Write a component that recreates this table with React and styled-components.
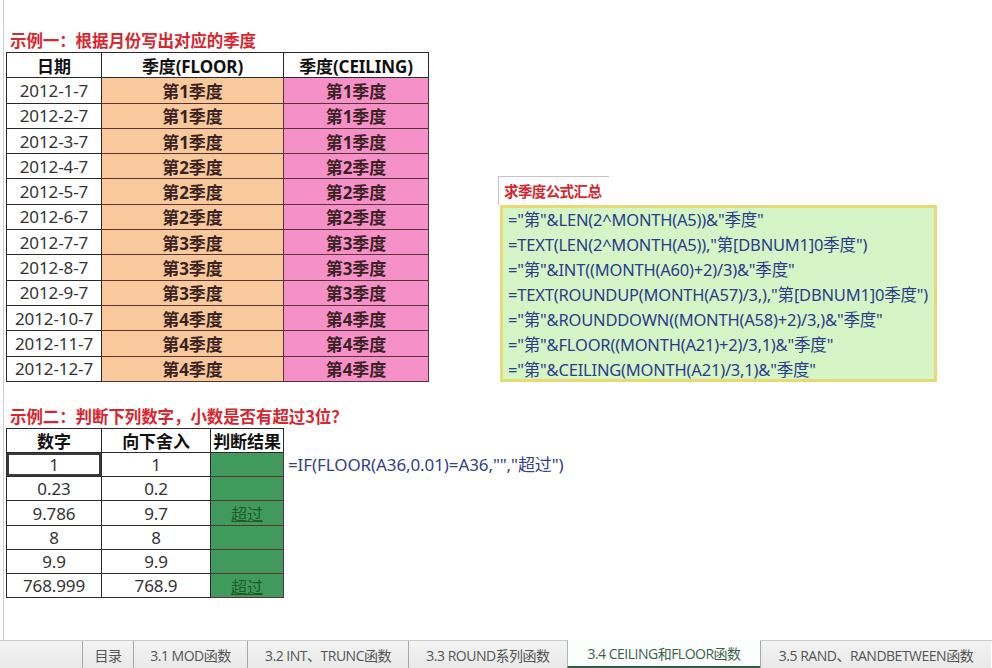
import React from 'react'
import styled, { createGlobalStyle } from 'styled-components'

const GlobalStyle = createGlobalStyle`
  html, body {
    margin: 0;
    padding: 0;
    background: #ffffff;
  }
  body {
    font-family: "Noto Sans", "Noto Sans CJK SC", sans-serif;
  }
`

const Sheet = styled.div`
  width: 992px;
  height: 668px;
  display: flex;
  flex-direction: column;
  overflow: hidden;
  background: #fff;
`

const Canvas = styled.div`
  flex: 1;
  margin-left: 3px;
  border-left: 1px solid #cfcfcf;
  padding: 29px 0 0 2px;
`

const SectionTitle = styled.div`
  height: 23px;
  line-height: 23px;
  padding: ${p => p.top || 0}px 0 0 4px;
  font-family: "Noto Sans CJK SC", sans-serif;
  font-size: 16.5px;
  font-weight: 700;
  color: #d8262e;
  letter-spacing: -0.1px;
`

const ExampleRow = styled.div`
  display: flex;
  align-items: ${p => p.align || 'flex-start'};
  gap: ${p => p.gap || 0}px;
`

const Grid = styled.div`
  display: grid;
  grid-template-columns: ${p => p.cols};
  grid-auto-rows: ${p => p.rowH}px;
  border-top: 1px solid #2a2a2a;
  border-left: 1px solid #2a2a2a;
`

const Cell = styled.div`
  display: flex;
  align-items: center;
  justify-content: center;
  border-right: 1px solid ${p => (p.bg ? '#5a3434' : '#2a2a2a')};
  border-bottom: 1px solid ${p => (p.bg ? '#5a3434' : '#2a2a2a')};
  background: ${p => p.bg || '#fff'};
  font-family: "Noto Sans", "Noto Sans CJK SC", sans-serif;
  font-size: 17px;
  font-weight: ${p => (p.bold ? 700 : 400)};
  color: ${p => p.color || '#333'};
  white-space: nowrap;
  letter-spacing: -0.1px;
  box-shadow: ${p => (p.active ? 'inset 0 0 0 2px #3a3a3a' : 'none')};
`

const Over = styled.span`
  color: #1f5a2e;
  text-decoration: underline;
  font-family: "Noto Sans CJK SC", sans-serif;
  font-size: 16px;
`

const FormulaColumn = styled.div`
  display: flex;
  flex-direction: column;
  align-items: flex-start;
`

const FormulaTitle = styled.div`
  height: 28px;
  line-height: 28px;
  padding: 0 8px 0 5px;
  border-top: 1px solid #c4c4c4;
  border-left: 1px solid #c4c4c4;
  font-family: "Noto Sans CJK SC", sans-serif;
  font-size: 14.5px;
  font-weight: 700;
  color: #d8262e;
  letter-spacing: -0.6px;
  white-space: nowrap;
`

const FormulaBox = styled.div`
  width: 426px;
  height: 171px;
  border: 3px solid #e6da72;
  background: #d5f5c6;
  padding: 0 0 0 5px;
  box-sizing: content-box;
  margin-left: 2px;
`

const FormulaLine = styled.div`
  height: 25px;
  line-height: 24px;
  font-family: "Noto Sans", "Noto Sans CJK SC", sans-serif;
  font-size: 16.5px;
  color: #2b3c8c;
  white-space: nowrap;
  letter-spacing: -0.2px;
`

const InlineFormula = styled(FormulaLine)`
  margin: 25px 0 0 4px;
  height: 24px;
  line-height: 24px;
  font-size: 17px;
  letter-spacing: -0.1px;
  color: #34408a;
`

const TabBar = styled.div`
  height: 27px;
  display: flex;
  align-items: stretch;
  padding-left: 82px;
  border-top: 1px solid #c9c9c9;
  background: linear-gradient(#f3f3f3, #e9e9e9);
`

const Tab = styled.div`
  width: ${p => p.w}px;
  display: flex;
  align-items: center;
  justify-content: center;
  font-family: "Open Sans", "Noto Sans CJK SC", sans-serif;
  font-size: 14px;
  letter-spacing: -0.5px;
  color: ${p => (p.active ? '#3b5f4e' : '#555')};
  background: ${p => (p.active ? '#fbfefc' : 'transparent')};
  border-left: 1px solid ${p => (p.active ? '#b5b5b5' : '#a8a8a8')};
  border-bottom: ${p => (p.active ? '2px solid #2f5e47' : 'none')};
  border-top-right-radius: ${p => (p.last ? 10 : 0)}px;
  margin-top: ${p => (p.active ? -1 : 0)}px;
  white-space: nowrap;
`

const TabTail = styled.div`
  flex: 1;
  background: #ffffff;
`

const dates = [
  '2012-1-7', '2012-2-7', '2012-3-7', '2012-4-7', '2012-5-7', '2012-6-7',
  '2012-7-7', '2012-8-7', '2012-9-7', '2012-10-7', '2012-11-7', '2012-12-7'
]

const formulas = [
  '="第"&LEN(2^MONTH(A5))&"季度"',
  '=TEXT(LEN(2^MONTH(A5)),"第[DBNUM1]0季度")',
  '="第"&INT((MONTH(A60)+2)/3)&"季度"',
  '=TEXT(ROUNDUP(MONTH(A57)/3,),"第[DBNUM1]0季度")',
  '="第"&ROUNDDOWN((MONTH(A58)+2)/3,)&"季度"',
  '="第"&FLOOR((MONTH(A21)+2)/3,1)&"季度"',
  '="第"&CEILING(MONTH(A21)/3,1)&"季度"'
]

const numbers = [
  ['1', '1', false],
  ['0.23', '0.2', false],
  ['9.786', '9.7', true],
  ['8', '8', false],
  ['9.9', '9.9', false],
  ['768.999', '768.9', true]
]

const tabs = [
  { name: '目录', w: 50 },
  { name: '3.1 MOD函数', w: 113 },
  { name: '3.2 INT、TRUNC函数', w: 160 },
  { name: '3.3 ROUND系列函数', w: 158 },
  { name: '3.4 CEILING和FLOOR函数', w: 192, active: true },
  { name: '3.5 RAND、RANDBETWEEN函数', w: 230, last: true }
]

const ORANGE = '#f8c99c'
const PINK = '#f590c9'
const GREEN = '#3f9a5c'

const QuarterTable = () => (
  <Grid cols="95px 182px 145px" rowH={25.3}>
    <Cell bold color="#111">日期</Cell>
    <Cell bold color="#111">季度(FLOOR)</Cell>
    <Cell bold color="#111">季度(CEILING)</Cell>
    {dates.map((d, i) => {
      const q = `第${Math.floor(i / 3) + 1}季度`
      return (
        <React.Fragment key={d}>
          <Cell>{d}</Cell>
          <Cell bg={ORANGE} bold color="#3a2222">{q}</Cell>
          <Cell bg={PINK} bold color="#3a2222">{q}</Cell>
        </React.Fragment>
      )
    })}
  </Grid>
)

const RoundTable = () => (
  <Grid cols="95px 109px 73px" rowH={24.2}>
    <Cell bold color="#111">数字</Cell>
    <Cell bold color="#111">向下舍入</Cell>
    <Cell bold color="#111">判断结果</Cell>
    {numbers.map(([n, r, over], i) => (
      <React.Fragment key={n}>
        <Cell active={i === 0}>{n}</Cell>
        <Cell>{r}</Cell>
        <Cell bg={GREEN}>{over && <Over>超过</Over>}</Cell>
      </React.Fragment>
    ))}
  </Grid>
)

export default function App() {
  return (
    <>
      <GlobalStyle />
      <Sheet>
        <Canvas>
          <SectionTitle>示例一：根据月份写出对应的季度</SectionTitle>
          <ExampleRow align="flex-end" gap={69}>
            <QuarterTable />
            <FormulaColumn>
              <FormulaTitle>求季度公式汇总</FormulaTitle>
              <FormulaBox>
                {formulas.map(f => (
                  <FormulaLine key={f}>{f}</FormulaLine>
                ))}
              </FormulaBox>
            </FormulaColumn>
          </ExampleRow>
          <SectionTitle top={23}>示例二：判断下列数字，小数是否有超过3位？</SectionTitle>
          <ExampleRow>
            <RoundTable />
            <InlineFormula>=IF(FLOOR(A36,0.01)=A36,"","超过")</InlineFormula>
          </ExampleRow>
        </Canvas>
        <TabBar>
          {tabs.map(t => (
            <Tab key={t.name} w={t.w} active={t.active} last={t.last}>
              {t.name}
            </Tab>
          ))}
          <TabTail />
        </TabBar>
      </Sheet>
    </>
  )
}
